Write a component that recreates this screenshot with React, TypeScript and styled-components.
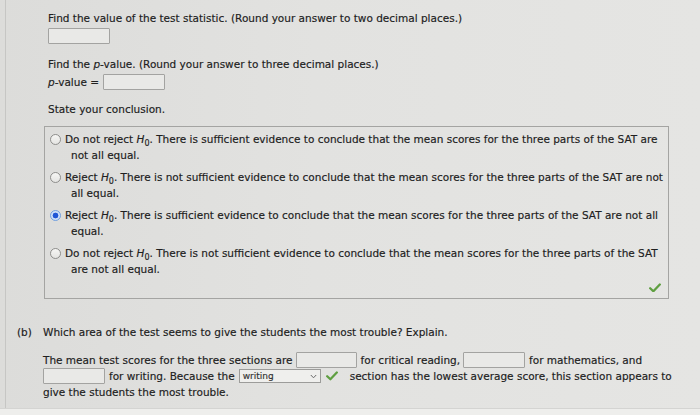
import React from "react";
import styled, { createGlobalStyle } from "styled-components";

const GlobalStyle = createGlobalStyle`
  html, body { margin: 0; padding: 0; }
  body {
    font-family: "DejaVu Sans", Verdana, sans-serif;
    color: #202020;
    -webkit-text-stroke: 0.15px #202020;
  }
  #root { width: 700px; height: 415px; overflow: hidden; }
`;

const Page = styled.div`
  width: 700px;
  height: 415px;
  display: flex;
  flex-direction: column;
  background: linear-gradient(90deg, #dcdcda 0%, #e2e2e0 45%, #e5e5e3 100%);
`;

const Panel = styled.div`
  flex: 1;
  margin-left: 5px;
  border-left: 1px solid #c6c6c4;
  display: flex;
  flex-direction: column;
`;

const BottomStrip = styled.div`
  height: 6px;
  background: #eeeeec;
  border-top: 1px solid #d4d4d2;
`;

const PartA = styled.section`
  padding: 10px 0 0 42px;
  display: flex;
  flex-direction: column;
  align-items: flex-start;
`;

const Text = styled.div<{ $mt?: number }>`
  font-size: 10.5px;
  line-height: 16px;
  margin-top: ${(p) => p.$mt ?? 0}px;
  white-space: nowrap;
`;

const Field = styled.span<{ $mt?: number; $w?: number }>`
  display: inline-block;
  box-sizing: border-box;
  width: ${(p) => p.$w ?? 62}px;
  height: 16px;
  margin-top: ${(p) => p.$mt ?? 0}px;
  border: 1px solid #a3a3a1;
  border-radius: 1px;
  background: #e9e9e7;
  flex: none;
`;

const Row = styled.div<{ $mt?: number }>`
  display: flex;
  align-items: center;
  height: 16px;
  margin-top: ${(p) => p.$mt ?? 0}px;
  font-size: 10.5px;
  white-space: pre;
`;

const Gap = styled.span<{ $w: number }>`
  display: inline-block;
  width: ${(p) => p.$w}px;
  flex: none;
`;

const Em = styled.i`
  font-style: italic;
`;

const Sub = styled.sub`
  font-size: 8px;
  font-style: normal;
  vertical-align: -2.5px;
  line-height: 0;
`;

const ChoiceBox = styled.div`
  box-sizing: border-box;
  width: 625px;
  margin: 9px 0 0 -4px;
  padding: 4px 0 0 5px;
  border: 1px solid #a4a4a2;
  display: flex;
  flex-direction: column;
`;

const Options = styled.div`
  display: flex;
  flex-direction: column;
  gap: 6px;
`;

const Option = styled.label`
  display: flex;
  align-items: flex-start;
`;

const Radio = styled.span<{ $checked?: boolean }>`
  box-sizing: border-box;
  flex: none;
  width: 11px;
  height: 11px;
  margin-top: 2.5px;
  border-radius: 50%;
  border: 1px solid ${(p) => (p.$checked ? "#6f9fe0" : "#8e8e8c")};
  background: ${(p) =>
    p.$checked
      ? "radial-gradient(circle, #1f56d6 0 2.6px, #cfe0f8 3.2px 100%)"
      : "linear-gradient(180deg, #f6f6f4, #e4e4e2)"};
`;

const OptionText = styled.span`
  display: flex;
  flex-direction: column;
  padding-left: 4px;
`;

const OptionLine = styled.span<{ $indent?: boolean }>`
  font-size: 10.5px;
  line-height: 16px;
  white-space: nowrap;
  padding-left: ${(p) => (p.$indent ? 6 : 0)}px;
`;

const CheckRow = styled.div`
  display: flex;
  justify-content: flex-end;
  align-items: center;
  height: 21px;
  padding-right: 7px;
`;

const PartB = styled.section`
  margin-top: 25px;
  padding-left: 11px;
  display: grid;
  grid-template-columns: 26px 1fr;
`;

const Label = styled.div`
  font-size: 10.5px;
  line-height: 16px;
  white-space: nowrap;
`;

const Body = styled.div`
  display: flex;
  flex-direction: column;
`;

const Select = styled.span`
  box-sizing: border-box;
  display: inline-flex;
  align-items: center;
  justify-content: space-between;
  flex: none;
  width: 82px;
  height: 14px;
  padding: 0 3px 0 3px;
  border: 1px solid #9c9c9a;
  background: #efefed;
  font-size: 9px;
  color: #3a3a3a;
`;

const Check = ({ size = 12 }: { size?: number }) => (
  <svg width={size} height={size * 0.8} viewBox="0 0 12 10" style={{ flex: "none" }}>
    <path d="M1 5.5 L4.3 8.6 L11 1.6" fill="none" stroke="#5f9f41" strokeWidth="2.4" strokeLinecap="round" strokeLinejoin="round" />
  </svg>
);

const Chevron = () => (
  <svg width="7" height="5" viewBox="0 0 7 5">
    <path d="M0.8 1 L3.5 3.8 L6.2 1" fill="none" stroke="#6a6a6a" strokeWidth="1" />
  </svg>
);

const H0 = () => (
  <>
    <Em>H</Em>
    <Sub>0</Sub>
  </>
);

const options: { lead: string; rest: string; second: string; checked?: boolean }[] = [
  {
    lead: "Do not reject ",
    rest: ". There is sufficient evidence to conclude that the mean scores for the three parts of the SAT are",
    second: "not all equal.",
  },
  {
    lead: "Reject ",
    rest: ". There is not sufficient evidence to conclude that the mean scores for the three parts of the SAT are not",
    second: "all equal.",
  },
  {
    lead: "Reject ",
    rest: ". There is sufficient evidence to conclude that the mean scores for the three parts of the SAT are not all",
    second: "equal.",
    checked: true,
  },
  {
    lead: "Do not reject ",
    rest: ". There is not sufficient evidence to conclude that the mean scores for the three parts of the SAT",
    second: "are not all equal.",
  },
];

export default function App() {
  return (
    <>
      <GlobalStyle />
      <Page>
        <Panel>
          <PartA>
            <Text>Find the value of the test statistic. (Round your answer to two decimal places.)</Text>
            <Field $mt={2} />
            <Text $mt={12}>
              Find the <Em>p</Em>-value. (Round your answer to three decimal places.)
            </Text>
            <Row $mt={2}>
              <Em>p</Em>-value =<Gap $w={4} />
              <Field />
            </Row>
            <Text $mt={11}>State your conclusion.</Text>
            <ChoiceBox>
              <Options>
                {options.map((o, i) => (
                  <Option key={i}>
                    <Radio $checked={o.checked} />
                    <OptionText>
                      <OptionLine>
                        {o.lead}
                        <H0 />
                        {o.rest}
                      </OptionLine>
                      <OptionLine $indent>{o.second}</OptionLine>
                    </OptionText>
                  </Option>
                ))}
              </Options>
              <CheckRow>
                <Check />
              </CheckRow>
            </ChoiceBox>
          </PartA>
          <PartB>
            <Label>(b)</Label>
            <Body>
              <Label>Which area of the test seems to give the students the most trouble? Explain.</Label>
              <Row $mt={12}>
                The mean test scores for the three sections are<Gap $w={3} />
                <Field $w={61} />
                <Gap $w={4} />for critical reading,<Gap $w={3} />
                <Field $w={62} />
                <Gap $w={4} />for mathematics, and
              </Row>
              <Row>
                <Field $w={62} />
                <Gap $w={4} />for writing. Because the<Gap $w={4} />
                <Select>
                  writing
                  <Chevron />
                </Select>
                <Gap $w={5} />
                <Check />
                <Gap $w={12} />section has the lowest average score, this section appears to
              </Row>
              <Row>give the students the most trouble.</Row>
            </Body>
          </PartB>
        </Panel>
        <BottomStrip />
      </Page>
    </>
  );
}
